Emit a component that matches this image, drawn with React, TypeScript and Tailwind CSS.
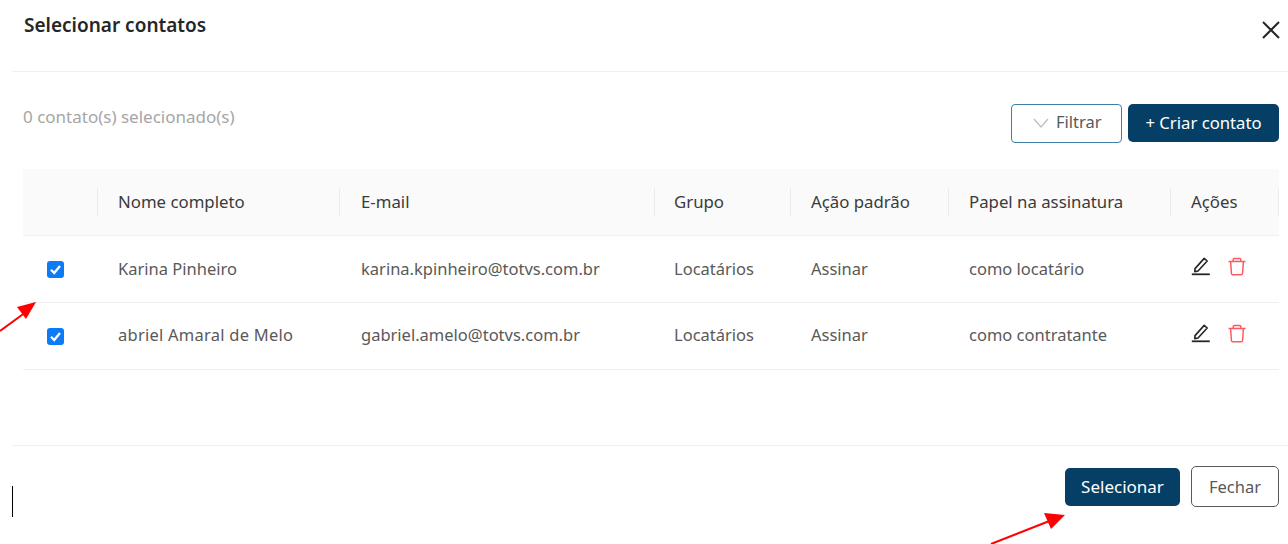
import { useState } from "react";

const rows = [
  ["Karina Pinheiro", "karina.kpinheiro@totvs.com.br", "Locatários", "Assinar", "como locatário"],
  ["abriel Amaral de Melo", "gabriel.amelo@totvs.com.br", "Locatários", "Assinar", "como contratante"],
];
const heads = ["", "Nome completo", "E-mail", "Grupo", "Ação padrão", "Papel na assinatura", "Ações"];
const headPad = ["pl-5", "pl-5", "pl-[21px]", "pl-[19px]", "pl-5", "pl-5", "pl-5"];
const cellPad = ["pl-5", "pl-[21px]", "pl-[19px]", "pl-5", "pl-5"];
const cols = "grid grid-cols-[75px_242px_315px_136px_158px_222px_108px]";

function Edit() {
  return (
    <svg className="mb-[6px]" width="20" height="20" viewBox="0 0 20 20" fill="none" stroke="#262626" strokeWidth="1.6">
      <path d="M4 12.6 L13.2 2.4 L16.2 5 L7 15 L3.8 15.6 Z" strokeLinejoin="round" />
      <path d="M0.8 18.3 H18.8" strokeWidth="1.8" />
    </svg>
  );
}
function Trash() {
  return (
    <svg className="mb-[4px]" width="18" height="20" viewBox="0 0 18 20" fill="none" stroke="#ff5a5f" strokeWidth="1.5">
      <path d="M0.5 4.5 H17.5" />
      <path d="M5.2 4.5 V2.6 Q5.2 1.5 6.3 1.5 H11.7 Q12.8 1.5 12.8 2.6 V4.5" />
      <path d="M2.6 4.5 L3.4 16.2 Q3.5 17.8 5 17.8 H13 Q14.5 17.8 14.6 16.2 L15.4 4.5" />
    </svg>
  );
}
function Check({ initial }: { initial: boolean }) {
  const [on, setOn] = useState(initial);
  return (
    <button onClick={() => setOn(!on)} className="w-[17px] h-[17px] rounded-[3px] bg-[#0d7bf5] flex items-center justify-center">
      {on && (
        <svg width="13" height="13" viewBox="0 0 13 13" fill="none" stroke="#fff" strokeWidth="2.3">
          <path d="M2 6.8 L5.2 10 L11 3" />
        </svg>
      )}
    </button>
  );
}

export default function App() {
  return (
    <div className="relative w-[1288px] h-[544px] overflow-hidden bg-white font-['Noto_Sans',sans-serif] text-[16.5px] text-[#595959]">
      <header className="ml-3 h-[72px] border-b border-[#f0f0f0] pl-3 pr-[7px] flex justify-between">
        <h1 className="mt-[11px] text-[19px] leading-[28px] font-semibold text-[#262626]">Selecionar contatos</h1>
        <button className="mt-[20px] h-5 w-5 text-[#262626]">
          <svg width="20" height="20" viewBox="0 0 20 20" fill="none" stroke="currentColor" strokeWidth="2">
            <path d="M2 2 L18 18 M18 2 L2 18" />
          </svg>
        </button>
      </header>

      <section className="ml-[23px] mr-[9px]">
        <div className="h-[97px] flex justify-between">
          <span className="mt-[33px] leading-[24px] text-[17px] text-[#a6a6a6]">0 contato(s) selecionado(s)</span>
          <div className="mt-[32px] flex gap-[6px] h-[39px]">
            <button className="w-[111px] rounded-[4px] border border-[#3f7ea8] flex items-center pl-[21px] pb-[2px] gap-[7px]">
              <svg width="16" height="10" viewBox="0 0 16 10" fill="none" stroke="#bfbfbf" strokeWidth="1.3">
                <path d="M1 1 L8 9 L15 1" />
              </svg>
              Filtrar
            </button>
            <button className="w-[151px] h-[38px] rounded-[5px] bg-[#053f65] text-white text-[16.7px]">+ Criar contato</button>
          </div>
        </div>

        <div className={`${cols} h-[67px] bg-[#fafafa] border-b border-[#f0f0f0] text-[#3a3a3a] text-[16.8px]`}>
          {heads.map((h, i) => (
            <div key={i} className="flex items-center">
              <span className={`flex-1 ${headPad[i]}`}>{h}</span>
              <span className="w-px h-[28px] bg-[#ebebeb]" />
            </div>
          ))}
        </div>

        {rows.map((r, i) => (
          <div key={i} className={`${cols} h-[67px] border-b border-[#f0f0f0] items-center`}>
            <div className="pl-6"><Check initial /></div>
            {r.map((c, j) => (
              <div key={c} className={`${cellPad[j]} ${i === 1 ? "pb-[2px]" : ""} ${c.startsWith("abriel") ? "tracking-[0.25px]" : ""}`}>{c}</div>
            ))}
            <div className="pl-5 flex items-center gap-[17px]">
              <Edit />
              <Trash />
            </div>
          </div>
        ))}
      </section>

      <footer className="ml-3 mt-[75px] border-t border-[#f0f0f0] pr-[9px] pt-5 flex justify-end items-start gap-[11px]">
        <button className="mt-[2px] w-[115px] h-[38px] rounded-[5px] bg-[#053f65] text-white text-[17px]">Selecionar</button>
        <button className="w-[88px] h-[41px] pt-[1px] rounded-[5px] border border-[#595959]">Fechar</button>
      </footer>

      <span className="absolute left-[12px] top-[486px] w-px h-[31px] bg-black" />

      <svg className="absolute left-0 top-0 pointer-events-none" width="1288" height="544" viewBox="0 0 1288 544">
        <path d="M0 331 L26 312" stroke="#ff0000" strokeWidth="2" />
        <path d="M36 302 L17 307 L26 319 Z" fill="#ff0000" />
        <path d="M991 544 L1052 520" stroke="#ff0000" strokeWidth="2" />
        <path d="M1065 515 L1044 513 L1051 529 Z" fill="#ff0000" />
      </svg>
    </div>
  );
}
